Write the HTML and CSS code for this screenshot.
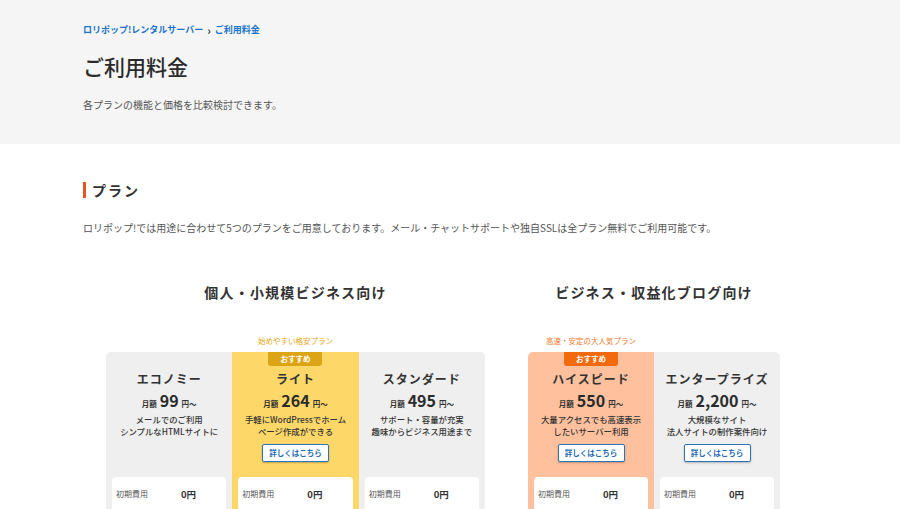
FILE: index.html
```html
<!DOCTYPE html>
<html lang="ja">
<head>
<meta charset="utf-8">
<title>ご利用料金</title>
<link rel="stylesheet" href="styles.css">
</head>
<body>
<header class="page-header">
  <nav class="breadcrumb"><a href="#">ロリポップ!レンタルサーバー</a><span class="sep">›</span><a href="#">ご利用料金</a></nav>
  <h1 class="page-title">ご利用料金</h1>
  <p class="page-lead">各プランの機能と価格を比較検討できます。</p>
</header>
<main class="section">
  <h2 class="section-title">プラン</h2>
  <p class="section-text">ロリポップ!では用途に合わせて5つのプランをご用意しております。メール・チャットサポートや独自SSLは全プラン無料でご利用可能です。</p>

  <div class="groups">
    <section class="group group-3">
      <h3 class="group-title">個人・小規模ビジネス向け</h3>
      <div class="plans">
        <div class="plan plan-first">
          <div class="plan-label"></div>
          <div class="plan-body">
            <div class="plan-head">
              <div class="plan-name">エコノミー</div>
              <div class="plan-price"><span class="unit">月額</span><span class="num">99</span><span class="unit">円〜</span></div>
              <p class="plan-desc">メールでのご利用<br>シンプルなHTMLサイトに</p>
            </div>
            <div class="plan-spec"><span class="spec-key">初期費用</span><span class="spec-val">0円</span></div>
          </div>
        </div>
        <div class="plan plan-lite">
          <div class="plan-label">始めやすい格安プラン</div>
          <div class="plan-body">
            <div class="plan-head">
              <span class="badge">おすすめ</span>
              <div class="plan-name">ライト</div>
              <div class="plan-price"><span class="unit">月額</span><span class="num">264</span><span class="unit">円〜</span></div>
              <p class="plan-desc">手軽にWordPressでホーム<br>ページ作成ができる</p>
              <a class="btn" href="#">詳しくはこちら</a>
            </div>
            <div class="plan-spec"><span class="spec-key">初期費用</span><span class="spec-val">0円</span></div>
          </div>
        </div>
        <div class="plan plan-last">
          <div class="plan-label"></div>
          <div class="plan-body">
            <div class="plan-head">
              <div class="plan-name">スタンダード</div>
              <div class="plan-price"><span class="unit">月額</span><span class="num">495</span><span class="unit">円〜</span></div>
              <p class="plan-desc">サポート・容量が充実<br>趣味からビジネス用途まで</p>
            </div>
            <div class="plan-spec"><span class="spec-key">初期費用</span><span class="spec-val">0円</span></div>
          </div>
        </div>
      </div>
    </section>

    <section class="group group-2">
      <h3 class="group-title">ビジネス・収益化ブログ向け</h3>
      <div class="plans">
        <div class="plan plan-first plan-hs">
          <div class="plan-label">高速・安定の大人気プラン</div>
          <div class="plan-body">
            <div class="plan-head">
              <span class="badge">おすすめ</span>
              <div class="plan-name">ハイスピード</div>
              <div class="plan-price"><span class="unit">月額</span><span class="num">550</span><span class="unit">円〜</span></div>
              <p class="plan-desc">大量アクセスでも高速表示<br>したいサーバー利用</p>
              <a class="btn" href="#">詳しくはこちら</a>
            </div>
            <div class="plan-spec"><span class="spec-key">初期費用</span><span class="spec-val">0円</span></div>
          </div>
        </div>
        <div class="plan plan-last">
          <div class="plan-label"></div>
          <div class="plan-body">
            <div class="plan-head">
              <div class="plan-name">エンタープライズ</div>
              <div class="plan-price"><span class="unit">月額</span><span class="num">2,200</span><span class="unit">円〜</span></div>
              <p class="plan-desc">大規模なサイト<br>法人サイトの制作案件向け</p>
              <a class="btn" href="#">詳しくはこちら</a>
            </div>
            <div class="plan-spec"><span class="spec-key">初期費用</span><span class="spec-val">0円</span></div>
          </div>
        </div>
      </div>
    </section>
  </div>
</main>
</body>
</html>
```
FILE: styles.css
```css
* { box-sizing: border-box; }
html, body { margin: 0; padding: 0; }
body {
  font-family: "Noto Sans CJK JP", "Noto Sans", sans-serif;
  color: #333;
  background: #fff;
  overflow: hidden;
}
a { text-decoration: none; }

.page-header {
  background: #f5f5f5;
  height: 144px;
  padding: 24px 83px 0;
}
.breadcrumb {
  font-size: 9px;
  line-height: 12px;
  font-weight: 700;
  display: flex;
  align-items: center;
}
.breadcrumb a { color: #1b74c9; }
.breadcrumb .sep { color: #333; margin: 0 4px 0 4px; font-size: 11px; }
.page-title {
  margin: 15px 0 0;
  font-size: 21px;
  line-height: 30px;
  font-weight: 500;
  color: #2b2b2b;
}
.page-lead {
  margin: 17px 0 0;
  font-size: 10px;
  line-height: 14px;
  color: #555;
}

.section { padding: 36px 83px 0; }
.section-title {
  margin: 0;
  font-size: 14px;
  line-height: 20px;
  font-weight: 700;
  letter-spacing: 2px;
  display: flex;
  align-items: center;
  color: #333;
}
.section-title::before {
  content: "";
  width: 3px;
  height: 16px;
  background: #e9531d;
  margin-right: 6px;
}
.section-text {
  margin: 21px 0 0;
  font-size: 10px;
  line-height: 14px;
  color: #555;
}

.groups {
  display: flex;
  gap: 43px;
  margin: 47px 0 0 23px;
}
.group-3 { width: 379px; }
.group-2 { width: 252px; }
.group-title {
  margin: 0;
  text-align: center;
  font-size: 14px;
  line-height: 20px;
  font-weight: 700;
  letter-spacing: 1.2px;
  color: #333;
}
.plans {
  display: flex;
  margin-top: 34px;
}
.plan { flex: 1; min-width: 0; display: flex; flex-direction: column; }
.plan-label {
  height: 10px;
  margin-bottom: 6px;
  text-align: center;
  font-size: 7.5px;
  line-height: 10px;
  white-space: nowrap;
  color: #e2a516;
}
.plan-hs .plan-label { color: #ef7a2c; }
.plan-body {
  background: #efefef;
  padding: 0 6px 40px;
}
.plan-first .plan-body { border-top-left-radius: 5px; }
.plan-last .plan-body { border-top-right-radius: 5px; }
.plan-lite .plan-body { background: #fdd869; }
.plan-hs .plan-body { background: #ffc09e; }

.plan-head {
  position: relative;
  height: 125px;
  padding-top: 19px;
  display: flex;
  flex-direction: column;
  align-items: center;
  text-align: center;
}
.badge {
  position: absolute;
  top: 0;
  left: 50%;
  transform: translateX(-50%);
  width: 54px;
  height: 14px;
  border-radius: 0 0 3px 3px;
  background: #dca515;
  color: #fff;
  font-size: 7.5px;
  line-height: 14px;
  font-weight: 700;
  text-align: center;
}
.plan-hs .badge { background: #f36a0e; }
.plan-name {
  font-size: 12px;
  line-height: 16px;
  font-weight: 700;
  letter-spacing: 1px;
  color: #333;
}
.plan-price {
  margin-top: 3px;
  height: 20px;
  display: flex;
  align-items: baseline;
  justify-content: center;
  gap: 2px;
  line-height: 20px;
}
.plan-price .unit { font-size: 7.5px; font-weight: 700; }
.plan-price .num { font-size: 16px; font-weight: 700; color: #2b2b2b; margin: 0 1px; }
.plan-desc {
  margin: 3px 0 0;
  font-size: 8.4px;
  line-height: 12px;
  font-weight: 500;
  color: #333;
  white-space: nowrap;
}
.btn {
  margin-top: 7px;
  width: 67px;
  height: 18px;
  border: 1.5px solid #2a74b8;
  border-radius: 2px;
  background: #fff;
  color: #1e6cb3;
  font-size: 7.5px;
  font-weight: 700;
  line-height: 15px;
  text-align: center;
  box-shadow: 0 1px 2px rgba(0,0,0,0.25);
}
.plan-spec {
  background: #fff;
  border-radius: 4px;
  padding: 11px 4px 20px;
  display: flex;
  align-items: center;
  line-height: 12px;
}
.spec-key { width: 65px; font-size: 8px; color: #555; }
.spec-val { font-size: 9.5px; font-weight: 700; color: #333; }
```
